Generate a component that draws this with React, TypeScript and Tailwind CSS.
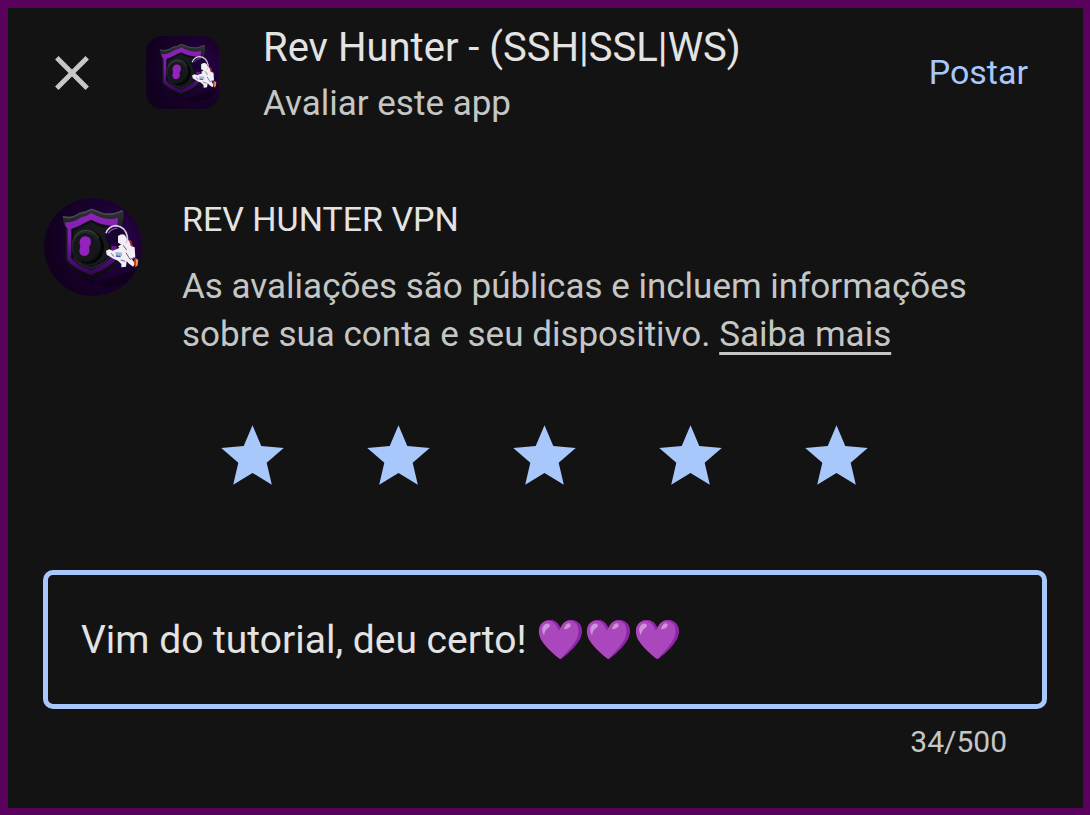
import { useState } from "react";

function Artwork({ className, id }: { className: string; id: string }) {
  return (
    <svg viewBox="6 6 294 294" className={className} aria-hidden="true">
      <defs>
        <radialGradient id={`${id}-bg`} cx="0.72" cy="0.42" r="0.7">
          <stop offset="0" stopColor="#2a034c" />
          <stop offset="0.5" stopColor="#1b0131" />
          <stop offset="1" stopColor="#12001f" />
        </radialGradient>
        <linearGradient id={`${id}-body`} x1="0" y1="0" x2="0" y2="1">
          <stop offset="0" stopColor="#303436" />
          <stop offset="0.3" stopColor="#1b1e20" />
          <stop offset="1" stopColor="#0a0a0e" />
        </linearGradient>
        <linearGradient id={`${id}-rim`} x1="0" y1="0" x2="0" y2="1">
          <stop offset="0" stopColor="#8f22bd" />
          <stop offset="0.45" stopColor="#7c1ca8" />
          <stop offset="0.75" stopColor="#4d0d78" />
          <stop offset="1" stopColor="#32064f" />
        </linearGradient>
        <linearGradient id={`${id}-knob`} x1="0.2" y1="0" x2="0.8" y2="1">
          <stop offset="0" stopColor="#2b2d32" />
          <stop offset="1" stopColor="#0e0f12" />
        </linearGradient>
      </defs>
      <rect x="6" y="6" width="294" height="294" fill={`url(#${id}-bg)`} />
      <path d="M110 232 L150 262 L225 240 L290 215 L262 262 L190 275 Z" fill="#0b0014" opacity="0.6" />
      <path d="M62 60 Q90 68 112 50 Q132 48 148 38 Q164 42 180 50 Q210 58 243 42 Q248 62 240 86 L236 194 Q214 220 148 250 Q86 224 70 194 L72 96 Q64 84 62 60 Z" fill={`url(#${id}-body)`} />
      <path d="M63 62 Q90 70 113 52 Q133 50 148 40 Q164 44 180 52 Q210 60 242 44" fill="none" stroke="#4b4e52" strokeWidth="4" />
      <path d="M68 80 Q96 80 118 64 Q134 61 148 52 Q162 60 182 66 Q206 72 228 66 L226 88 L222 190 Q206 214 147 238 Q90 214 76 192 L77 98 Q70 92 68 80 Z" fill={`url(#${id}-rim)`} />
      <path d="M88 99 Q110 92 126 82 L148 71 Q164 80 180 85 L210 90 L207 184 Q196 202 147 222 Q102 206 87 186 Z" fill="#0b0d10" />
      <path d="M95 105 Q116 98 130 88 L148 79 Q164 88 178 92 L202 97 L200 180 Q190 194 147 212 Q106 198 95 182 Z" fill="#171a1d" />
      <path d="M94 186 Q106 202 147 217 Q192 200 202 184" fill="none" stroke="#2a2630" strokeWidth="4" />
      <ellipse cx="140" cy="154" rx="46" ry="50" fill="#050608" />
      <ellipse cx="132" cy="150" rx="44" ry="48" fill={`url(#${id}-knob)`} />
      <ellipse cx="130" cy="152" rx="36" ry="40" fill="#15171a" />
      <path d="M97 124 Q110 102 136 103 Q160 106 170 126" fill="none" stroke="#44444b" strokeWidth="3" />
      <path d="M130 121 C144 121 149 132 146 143 C145 149 141 150 141 155 C145 168 139 180 127 180 C114 180 109 167 114 156 C117 150 112 147 113 138 C114 128 120 121 130 121 Z" fill="#9422bd" />
      <path d="M256 128 L268 134 L274 156 L270 172 L256 156 Z" fill="#a62a34" />
      <path d="M236 132 L250 124 L262 136 L266 150 L278 154 L280 184 L270 190 L278 202 L274 212 L262 204 L254 196 L252 212 L238 214 L238 204 L228 194 L214 188 L194 176 L192 164 L202 160 L212 164 L232 156 L226 146 Z" fill="#f1eef4" />
      <circle cx="220" cy="121" r="30" fill="#190330" />
      <path d="M192 112 Q200 90 222 89 Q250 92 256 122 Q258 134 250 142" fill="none" stroke="#d9c9e6" strokeWidth="5" />
      <path d="M199 112 Q208 97 226 97" fill="none" stroke="#7c4aa3" strokeWidth="4" />
      <path d="M228 120 Q238 112 247 116 Q256 124 252 138 L240 146 L228 140 Z" fill="#f1eef4" />
      <path d="M244 148 L254 162 M252 170 L264 190 L278 184 M236 192 L250 196 M208 172 L216 182" fill="none" stroke="#6c6280" strokeWidth="3" />
      <path d="M220 168 L240 170 L240 180 L222 180 Z" fill="#9fb4d6" />
      <path d="M222 180 L236 182" stroke="#3b5f9c" strokeWidth="4" />
      <path d="M280 186 L289 192 L287 208 L280 214 Z" fill="#eda02d" />
      <path d="M276 190 L282 190 L281 212 L276 206 Z" fill="#c9362f" />
    </svg>
  );
}

function Star({ filled }: { filled: boolean }) {
  return (
    <svg viewBox="0 0 24 24" className="size-[75px]" aria-hidden="true">
      <path
        d="M12 17.27L18.18 21l-1.64-7.03L22 9.24l-7.19-.61L12 2 9.19 8.63 2 9.24l5.46 4.73L5.82 21z"
        fill={filled ? "#a8c7fa" : "#444746"}
      />
    </svg>
  );
}

export default function App() {
  const [rating, setRating] = useState(5);
  const [review, setReview] = useState("Vim do tutorial, deu certo! 💜💜💜");

  return (
    <main className="min-h-screen border-[7px] border-t-8 border-l-8 border-[#5a005d] bg-[#131313] pb-10 font-[Roboto,'Noto_Color_Emoji',sans-serif] text-[#e3e3e3]">
      <header className="flex items-start pt-4 pr-[55px] pl-[35px]">
        <button type="button" aria-label="Fechar" className="mt-5 shrink-0">
          <svg viewBox="0 0 24 24" className="size-[58px]" aria-hidden="true">
            <path
              d="M19 6.41L17.59 5 12 10.59 6.41 5 5 6.41 10.59 12 5 17.59 6.41 19 12 13.41 17.59 19 19 17.59 13.41 12z"
              fill="#c7c7c7"
            />
          </svg>
        </button>
        <div className="mt-3 ml-[45px] size-[73px] shrink-0 overflow-hidden rounded-2xl">
          <Artwork id="app" className="size-full" />
        </div>
        <div className="ml-11 min-w-0 flex-1">
          <h1 className="text-[40px] leading-[48px]">Rev Hunter - (SSH|SSL|WS)</h1>
          <p className="pt-2 text-[35px] leading-[48px] text-[#c4c7c5]">Avaliar este app</p>
        </div>
        <button type="button" className="mt-6 shrink-0 text-[34px] leading-[48px] text-[#a8c7fa]">
          Postar
        </button>
      </header>

      <section className="flex items-start gap-10 pt-[67px] pr-14 pl-9">
        <div className="mt-[3px] size-[98px] shrink-0 overflow-hidden rounded-full">
          <Artwork id="avatar" className="size-full" />
        </div>
        <div className="min-w-0 flex-1">
          <h2 className="text-[34px] leading-[48px]">REV HUNTER VPN</h2>
          <p className="max-w-[800px] pt-5 text-[35px] leading-[48px] text-[#c4c7c5]">
            As avaliações são públicas e incluem informações sobre sua conta e seu dispositivo.{" "}
            <a href="#saiba-mais" className="underline decoration-[3px] underline-offset-[6px]">
              Saiba mais
            </a>
          </p>
        </div>
      </section>

      <div role="group" aria-label="Classificação" className="flex justify-center gap-[71px] pt-[60px] pr-[2px]">
        {[1, 2, 3, 4, 5].map((value) => (
          <button key={value} type="button" aria-label={`${value} estrelas`} aria-pressed={value <= rating} onClick={() => setRating(value)}>
            <Star filled={value <= rating} />
          </button>
        ))}
      </div>

      <div className="pt-[76px] pr-9 pl-[35px]">
        <input
          type="text"
          aria-label="Escreva uma avaliação"
          maxLength={500}
          value={review}
          onChange={(event) => setReview(event.target.value)}
          className="h-[139px] w-full rounded-[10px] border-[5px] border-[#a8c7fa] bg-transparent px-[33px] text-[39px] outline-none"
        />
        <p className="pt-3 pr-10 text-right text-[30px] leading-[42px] text-[#c4c7c5]">{review.length}/500</p>
      </div>
    </main>
  );
}
